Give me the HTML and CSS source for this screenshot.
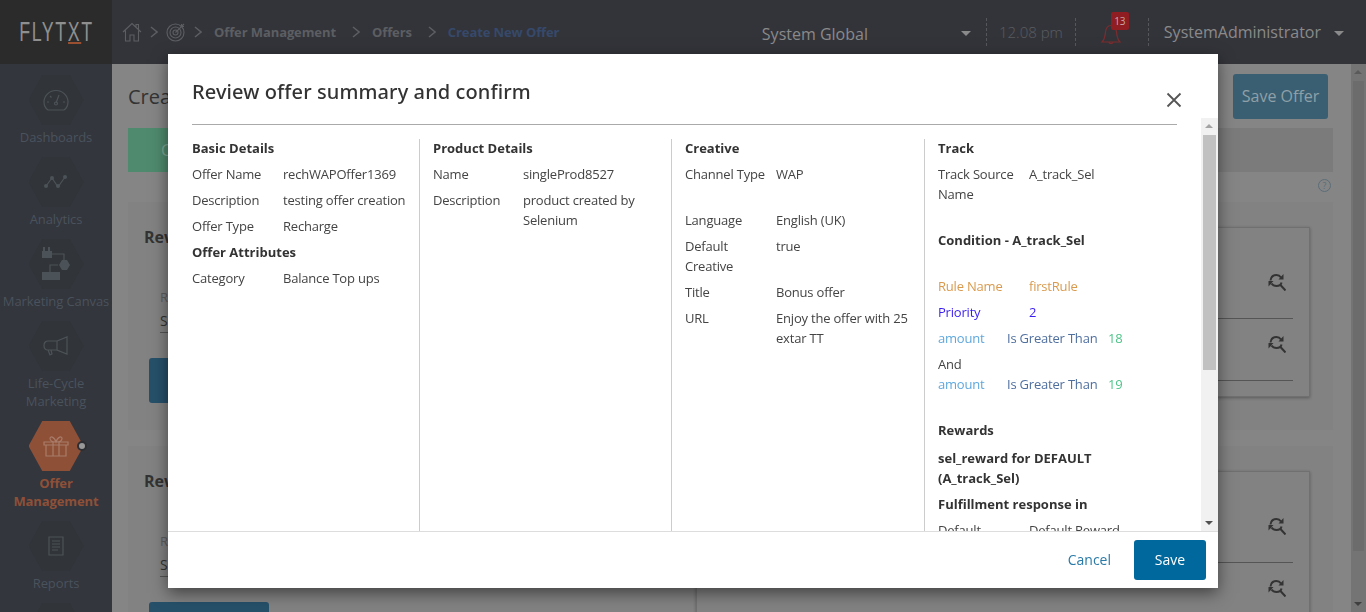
FILE: index.html
```html
<!DOCTYPE html>
<html lang="en">
<head>
    <meta charset="UTF-8">
    <title>Create New Offer</title>
    <link rel="stylesheet" href="styles.css">
</head>
<body>

    <header class="topbar">
        <div class="logo"><span class="logo-text">FLYT<span class="logo-x">X</span>T</span></div>
        <nav class="crumbs">
            <svg class="crumb-icon" viewBox="0 0 20 20"><path d="M1 10 10 1.500 19 10M3.500 8.500V19H8v-6h4v6h4.500V8.500M14 5V2.500h2.500V7.500"/></svg>
            <svg class="chev" viewBox="0 0 8 12"><path d="M1 1l6 5-6 5"/></svg>
            <svg class="crumb-icon" viewBox="0 0 20 20"><circle cx="9.500" cy="10.500" r="8.500"/><circle cx="9.500" cy="10.500" r="5.500"/><circle cx="9.500" cy="10.500" r="2.500"/><path d="M9.500 10.500 18 2M15.500 2v2.500H18"/></svg>
            <svg class="chev" viewBox="0 0 8 12"><path d="M1 1l6 5-6 5"/></svg>
            <span class="crumb crumb-first">Offer Management</span>
            <svg class="chev chev-wide" viewBox="0 0 8 12"><path d="M1 1l6 5-6 5"/></svg>
            <span class="crumb">Offers</span>
            <svg class="chev chev-wide" viewBox="0 0 8 12"><path d="M1 1l6 5-6 5"/></svg>
            <span class="crumb crumb-active">Create New Offer</span>
        </nav>
        <div class="top-right">
            <span class="region">System Global</span>
            <span class="caret caret-region"></span>
            <span class="clock">12.08 pm</span>
            <span class="bell">
                <svg viewBox="0 0 20 22"><path d="M1 20c3-3 3-6 3.500-10C5 6 7 3.500 10 3.500S15 6 15.500 10c.5 4 .5 7 3.500 10zM8 20c0 2 4 2 4 0"/></svg>
                <span class="badge">13</span>
            </span>
            <span class="user">SystemAdministrator</span>
            <span class="caret"></span>
        </div>
    </header>

    <div class="layout">
        <aside class="sidebar">
            <div class="nav-item">
                <div class="hex">
                    <svg viewBox="0 0 26 22"><path d="M5 21C2 19 1 15.500 1 13 1 6.500 6.500 1.500 13 1.500S25 6.500 25 13c0 2.500-1 6-4 8zM13 14l3-8M4 13h2M20 13h2M7 7l1.500 1.500"/><circle cx="13" cy="14.500" r="1.500"/></svg>
                </div>
                <div class="nav-label">Dashboards</div>
            </div>
            <div class="nav-item">
                <div class="hex">
                    <svg viewBox="0 0 26 16"><path d="M3 12 9 4l6 9 7-10"/><circle class="solid" cx="3" cy="12" r="2"/><circle class="solid" cx="9" cy="4" r="2"/><circle class="solid" cx="15" cy="12" r="2"/><circle class="solid" cx="22" cy="3" r="2"/></svg>
                </div>
                <div class="nav-label">Analytics</div>
            </div>
            <div class="nav-item">
                <div class="hex">
                    <svg class="canvas-icon" viewBox="0 0 30 36"><rect class="solid" x="1" y="5" width="10" height="7"/><rect class="solid" x="2" y="1" width="2" height="4"/><rect class="solid" x="7" y="1" width="2" height="4"/><path d="M11 8h12v6M17 19H9v8"/><polygon class="solid" points="18,19 21,14 26,14 29,19 26,24 21,24"/><rect class="solid" x="1" y="26" width="18" height="8"/></svg>
                </div>
                <div class="nav-label nav-label-wide">Marketing Canvas</div>
            </div>
            <div class="nav-item">
                <div class="hex">
                    <svg viewBox="0 0 26 20"><path d="M14 5 24 1v17L14 14zM14 5H5C2.500 5 1 7 1 9.500S2.500 14 5 14h9zM8 14l1 4-2 1-2-5"/></svg>
                </div>
                <div class="nav-label">Life-Cycle<br>Marketing</div>
            </div>
            <div class="nav-item nav-item-active">
                <div class="hex">
                    <svg viewBox="0 0 26 22"><path d="M1 7h24v3H1zM3 10h20v11H3zM10 7v14M16 7v14M13 7C10 7 7 6 7 3.500S11 1 13 7c2-6 6-6 6-3.500S16 7 13 7z"/></svg>
                    <span class="hex-dot"></span>
                </div>
                <div class="nav-label">Offer<br>Management</div>
            </div>
            <div class="nav-item">
                <div class="hex">
                    <svg class="report-icon" viewBox="0 0 16 20"><path d="M1 1h14v18H1zM4 5h8M4 8h8M4 11h8M4 14h6"/></svg>
                </div>
                <div class="nav-label">Reports</div>
            </div>
            <div class="nav-item">
                <div class="hex"></div>
            </div>
        </aside>

        <main class="page">
            <div class="page-head">
                <h1>Create New Offer</h1>
                <button class="save-offer">Save Offer</button>
            </div>
            <div class="steps"><div class="step-done">Create</div></div>
            <div class="help-row"><span class="help">?</span></div>

            <section class="review-card">
                <div class="review-left">
                    <h3>Reward</h3>
                    <div class="field-label">Reward</div>
                    <div class="field-value">Select</div>
                    <div class="blue-btn"></div>
                </div>
                <div class="review-right">
                    <div class="result-row">
                        <svg class="refresh" viewBox="0 0 18 18"><path d="M2.500 7.500C3 3.500 6 2 8.500 2c2 0 3.500 1 4.500 2.500M13.500 9.500c-.5 2.500-2.500 3.500-5 3.500-2 0-4-1-5-2.500M12 11.500l5.500 6"/><path class="solid" d="M10.500 6.500h5V1zM.5 8h5L.5 13.500z"/></svg>
                    </div>
                    <div class="result-row">
                        <svg class="refresh" viewBox="0 0 18 18"><path d="M2.500 7.500C3 3.500 6 2 8.500 2c2 0 3.500 1 4.500 2.500M13.500 9.500c-.5 2.500-2.500 3.500-5 3.500-2 0-4-1-5-2.500M12 11.500l5.500 6"/><path class="solid" d="M10.500 6.500h5V1zM.5 8h5L.5 13.500z"/></svg>
                    </div>
                </div>
            </section>

            <section class="review-card">
                <div class="review-left">
                    <h3>Reward</h3>
                    <div class="field-label">Reward</div>
                    <div class="field-value">Select</div>
                    <div class="blue-btn"></div>
                </div>
                <div class="review-right">
                    <div class="result-row">
                        <svg class="refresh" viewBox="0 0 18 18"><path d="M2.500 7.500C3 3.500 6 2 8.500 2c2 0 3.500 1 4.500 2.500M13.500 9.500c-.5 2.500-2.500 3.500-5 3.500-2 0-4-1-5-2.500M12 11.500l5.500 6"/><path class="solid" d="M10.500 6.500h5V1zM.5 8h5L.5 13.500z"/></svg>
                    </div>
                    <div class="result-row">
                        <svg class="refresh" viewBox="0 0 18 18"><path d="M2.500 7.500C3 3.500 6 2 8.500 2c2 0 3.500 1 4.500 2.500M13.500 9.500c-.5 2.500-2.500 3.500-5 3.500-2 0-4-1-5-2.500M12 11.500l5.500 6"/><path class="solid" d="M10.500 6.500h5V1zM.5 8h5L.5 13.500z"/></svg>
                    </div>
                    <div class="failure-label">Default Failure</div>
                    <div class="failure-text">Failure from Selenium from first rule</div>
                </div>
            </section>
        </main>

        <div class="page-scroll">
            <span class="arrow-up"></span>
            <span class="page-thumb"></span>
            <span class="arrow-down"></span>
        </div>
    </div>

    <div class="modal">
        <div class="modal-head">
            <h2>Review offer summary and confirm</h2>
            <svg class="close" viewBox="0 0 16 16"><path d="M1.500 1.500l13 13M14.500 1.500l-13 13"/></svg>
        </div>
        <div class="modal-body">
            <div class="modal-scroll">
                <hr class="head-line">
                <div class="summary">
                    <div class="col col-first">
                        <div class="heading">Basic Details</div>
                        <div class="row"><span class="key">Offer Name</span><span>rechWAPOffer1369</span></div>
                        <div class="row"><span class="key">Description</span><span>testing offer creation</span></div>
                        <div class="row"><span class="key">Offer Type</span><span>Recharge</span></div>
                        <div class="heading">Offer Attributes</div>
                        <div class="row"><span class="key">Category</span><span>Balance Top ups</span></div>
                    </div>
                    <div class="col">
                        <div class="heading">Product Details</div>
                        <div class="row row-90"><span class="key">Name</span><span>singleProd8527</span></div>
                        <div class="row row-90"><span class="key">Description</span><span>product created by Selenium</span></div>
                    </div>
                    <div class="col">
                        <div class="heading">Creative</div>
                        <div class="row row-spaced"><span class="key">Channel Type</span><span>WAP</span></div>
                        <div class="row"><span class="key">Language</span><span>English (UK)</span></div>
                        <div class="row"><span class="key">Default Creative</span><span>true</span></div>
                        <div class="row"><span class="key">Title</span><span>Bonus offer</span></div>
                        <div class="row"><span class="key">URL</span><span>Enjoy the offer with 25 extar TT</span></div>
                    </div>
                    <div class="col col-last">
                        <div class="heading">Track</div>
                        <div class="row row-spaced"><span class="key">Track Source Name</span><span>A_track_Sel</span></div>
                        <div class="heading heading-spaced">Condition - A_track_Sel</div>
                        <div class="row rule-name"><span class="key">Rule Name</span><span>firstRule</span></div>
                        <div class="row priority"><span class="key">Priority</span><span>2</span></div>
                        <div class="cond"><span class="cond-field">amount</span><span class="cond-op">Is Greater Than</span><span class="cond-val">18</span></div>
                        <div class="cond-and">And</div>
                        <div class="cond cond-spaced"><span class="cond-field">amount</span><span class="cond-op">Is Greater Than</span><span class="cond-val">19</span></div>
                        <div class="heading heading-tight">Rewards</div>
                        <div class="heading">sel_reward for DEFAULT (A_track_Sel)</div>
                        <div class="heading">Fulfillment response in</div>
                        <div class="row"><span class="key">Default</span><span>Default Reward</span></div>
                    </div>
                </div>
            </div>
            <div class="scrollbar">
                <span class="arrow-up"></span>
                <span class="thumb"></span>
                <span class="arrow-down"></span>
            </div>
        </div>
        <div class="modal-foot">
            <a class="cancel">Cancel</a>
            <button class="save">Save</button>
        </div>
    </div>

</body>
</html>
```

FILE: styles.css
```css
* {
    margin: 0;
    padding: 0;
    box-sizing: border-box;
}
html, body {
    height: 100%;
    overflow: hidden;
}
body {
    font-family: "Open Sans", "Noto Sans", sans-serif;
    font-size: 13px;
    color: #444;
    background: #858585;
}
svg {
    fill: none;
    stroke: currentColor;
    stroke-width: 1.2;
}
svg .solid {
    fill: currentColor;
    stroke: none;
}

/* top bar */
.topbar {
    display: flex;
    height: 64px;
    background: #33343a;
}
.logo {
    display: flex;
    align-items: center;
    justify-content: center;
    flex: none;
    width: 112px;
    height: 64px;
    background: #2b2b2b;
    color: #8f8f8f;
    font-family: "Liberation Sans", sans-serif;
    font-size: 27px;
    white-space: nowrap;
}
.logo-text {
    display: inline-block;
    transform: scaleX(.66);
    letter-spacing: 2.4px;
}
.logo-x {
    display: inline-block;
    line-height: 20px;
    border-bottom: 2px solid #9a4f30;
}
.crumbs {
    display: flex;
    align-items: center;
    padding-left: 10px;
    color: #5c5e62;
}
.crumb-icon {
    width: 20px;
    height: 20px;
    stroke-width: 1.1;
}
.chev {
    width: 8px;
    height: 12px;
    margin: 0 8px;
    stroke-width: 1.5;
}
.chev-wide {
    margin: 0 12px 0 16px;
}
.crumb {
    font-weight: 700;
    letter-spacing: -.1px;
    white-space: nowrap;
}
.crumb-first {
    margin-left: 4px;
}
.crumb-active {
    color: #36496b;
}
.top-right {
    display: flex;
    align-items: center;
    margin-left: auto;
    padding-right: 22px;
    color: #8a8a8a;
    font-size: 16px;
}
.region {
    margin: 4px 93px 0 0;
}
.caret {
    width: 0;
    height: 0;
    border-left: 5px solid transparent;
    border-right: 5px solid transparent;
    border-top: 5px solid #8a8a8a;
    margin-top: 3px;
}
.caret-region {
    margin-right: 15px;
}
.clock {
    padding: 0 12px;
    border-left: 1px dashed #55575c;
    border-right: 1px dashed #55575c;
    color: #5a5c60;
    font-size: 15px;
    font-weight: 300;
    line-height: 28px;
}
.bell {
    position: relative;
    display: flex;
    width: 73px;
    height: 28px;
    padding: 4px 0 0 25px;
    border-right: 1px dashed #55575c;
    color: #7d2c2e;
}
.bell svg {
    width: 20px;
    height: 22px;
    stroke-width: 1.2;
}
.badge {
    position: absolute;
    top: -6px;
    left: 35px;
    width: 18px;
    height: 18px;
    border-radius: 2px;
    background: #8f1d21;
    color: #c9a6a7;
    font-size: 10px;
    line-height: 18px;
    text-align: center;
}
.user {
    margin: 0 13px 0 15px;
}

/* sidebar and page behind the dialog */
.layout {
    display: flex;
    height: 548px;
}
.sidebar {
    flex: none;
    width: 112px;
    padding-top: 11px;
    background: #33363c;
    overflow: hidden;
}
.nav-item {
    margin-bottom: 11px;
    text-align: center;
    color: #4a525c;
}
.hex {
    position: relative;
    display: flex;
    align-items: center;
    justify-content: center;
    width: 55px;
    height: 50px;
    margin: 0 auto 3px;
    color: #4c5358;
}
.hex::before {
    content: "";
    position: absolute;
    inset: 0;
    background: #313439;
    clip-path: polygon(25% 0, 75% 0, 100% 50%, 75% 100%, 25% 100%, 0 50%);
}
.hex svg {
    position: relative;
    width: 26px;
    height: 22px;
}
.hex .canvas-icon {
    width: 30px;
    height: 36px;
}
.hex .report-icon {
    width: 16px;
    height: 20px;
}
.nav-label {
    letter-spacing: -.1px;
    line-height: 18px;
}
.nav-label-wide {
    white-space: nowrap;
}
.nav-item-active {
    color: #8f5038;
    font-weight: 700;
}
.nav-item-active .hex {
    color: #a87c68;
}
.nav-item-active .hex::before {
    background: #8f5038;
}
.hex-dot {
    position: absolute;
    top: 20px;
    right: -3px;
    width: 10px;
    height: 10px;
    border: 2px solid #2d2e33;
    border-radius: 50%;
    background: #999;
}
.page {
    flex: 1;
    min-width: 0;
    padding: 10px 18px 0 16px;
    overflow: hidden;
}
.page-head {
    display: flex;
    align-items: center;
    justify-content: space-between;
    height: 45px;
    padding-right: 5px;
}
.page-head h1 {
    font-size: 20px;
    font-weight: 400;
    color: #333;
}
.save-offer {
    width: 95px;
    height: 45px;
    padding-bottom: 2px;
    border: none;
    border-radius: 3px;
    background: #3a5f72;
    color: #8fa0a8;
    font: inherit;
    font-size: 16px;
}
.steps {
    height: 44px;
    margin-top: 9px;
    background: #7b7b7b;
}
.step-done {
    width: 200px;
    height: 44px;
    padding-left: 33px;
    background: #4f8a6e;
    color: #7fa893;
    font-size: 16px;
    line-height: 44px;
}
.help-row {
    display: flex;
    justify-content: flex-end;
    height: 30px;
    padding: 7px 2px 0 0;
}
.help {
    width: 13px;
    height: 13px;
    border: 1px solid #5b6d78;
    border-radius: 50%;
    color: #5b6d78;
    font-size: 9px;
    line-height: 11px;
    text-align: center;
}
.review-card {
    display: flex;
    justify-content: space-between;
    height: 228px;
    margin-bottom: 16px;
    padding: 25px 23px 0 16px;
    background: #828282;
}
.review-left h3 {
    font-size: 16px;
    line-height: 20px;
    color: #333;
}
.field-label {
    margin: 41px 0 0 16px;
    color: #5e5e5e;
}
.field-value {
    width: 200px;
    margin-left: 16px;
    padding: 5px 0 2px;
    border-bottom: 1px solid #555;
    color: #333;
    font-size: 14px;
}
.blue-btn {
    width: 120px;
    height: 45px;
    margin: 25px 0 0 5px;
    border-radius: 3px;
    background: #26506a;
}
.review-right {
    width: 614px;
    height: 170px;
    padding: 0 16px;
    background: #828282;
    border: 1px solid #707070;
    box-shadow: 0 1px 3px rgba(0, 0, 0, .3);
}
.result-row {
    display: flex;
    justify-content: flex-end;
    align-items: center;
    height: 62px;
    padding: 0 7px 12px 0;
    border-bottom: 1px solid #555;
    color: #333;
}
.result-row:first-child {
    height: 91px;
    padding-top: 29px;
}
.refresh {
    width: 18px;
    height: 18px;
    stroke-width: 2;
}
.failure-label {
    margin-top: 3px;
    color: #4d4d4d;
    line-height: 16px;
}
.failure-text {
    color: #2e4a5c;
    font-size: 16px;
    line-height: 22px;
    white-space: nowrap;
}
.page-scroll {
    position: relative;
    flex: none;
    width: 15px;
    background: #747474;
}
.page-thumb {
    position: absolute;
    top: 17px;
    left: 2px;
    width: 11px;
    height: 470px;
    background: #6c6c6c;
}
.page-scroll .arrow-up {
    top: 6px;
    left: 3px;
    border-bottom-color: #5a5a5a;
}
.page-scroll .arrow-down {
    bottom: 6px;
    left: 3px;
    border-top-color: #3f3f3f;
}

/* dialog */
.modal {
    position: fixed;
    top: 54px;
    left: 168px;
    display: flex;
    flex-direction: column;
    width: 1050px;
    height: 534px;
    background: #fff;
    box-shadow: 0 5px 15px rgba(0, 0, 0, .5);
}
.modal-head {
    position: relative;
    flex: none;
    height: 64px;
    padding: 25px 0 0 24px;
}
.modal-head h2 {
    font-family: "Noto Sans", sans-serif;
    font-size: 20px;
    font-weight: 500;
    line-height: 26px;
    letter-spacing: .1px;
    color: #333;
}
.close {
    position: absolute;
    top: 38px;
    right: 36px;
    width: 16px;
    height: 16px;
    color: #555;
    stroke-width: 1.8;
}
.modal-body {
    position: relative;
    display: flex;
    flex: none;
    height: 413px;
    overflow: hidden;
}
.modal-scroll {
    flex: 1;
    min-width: 0;
    overflow: hidden;
}
.head-line {
    height: 1px;
    margin: 6px 24px 14px 24px;
    border: none;
    background: #aaa;
}
.summary {
    display: grid;
    grid-template-columns: 252px 252px 253px 1fr;
    height: 392px;
}
.col {
    padding-left: 13px;
    padding-right: 10px;
    border-right: 1px solid #ccc;
}
.col > :first-child {
    margin-top: -1px;
}
.col-first {
    padding-left: 24px;
}
.col-last {
    padding-right: 60px;
    border-right: none;
}
.heading {
    margin-bottom: 6px;
    color: #333;
    font-weight: 700;
    line-height: 20px;
}
.heading-spaced {
    margin-bottom: 26px;
}
.heading-tight {
    margin-bottom: 8px;
}
.row {
    display: flex;
    margin-bottom: 6px;
    letter-spacing: -.2px;
    line-height: 20px;
}
.row .key {
    flex: none;
    width: 91px;
    padding-right: 8px;
}
.row-90 .key {
    width: 90px;
}
.row-spaced {
    margin-bottom: 26px;
}
.rule-name {
    color: #d99a4e;
}
.priority {
    color: #3a1ff0;
}
.cond {
    display: flex;
    margin-bottom: 6px;
    letter-spacing: -.2px;
    line-height: 20px;
}
.cond-spaced {
    margin-bottom: 26px;
}
.cond-field {
    width: 69px;
    color: #5fa8dd;
}
.cond-op {
    width: 101px;
    color: #4f6f9f;
}
.cond-val {
    color: #4fc58a;
}
.cond-and {
    letter-spacing: -.2px;
    line-height: 20px;
}
.scrollbar {
    position: relative;
    flex: none;
    width: 17px;
    background: #f1f1f1;
}
.thumb {
    position: absolute;
    top: 17px;
    left: 2px;
    width: 13px;
    height: 235px;
    background: #c1c1c1;
}
.arrow-up, .arrow-down {
    position: absolute;
    width: 0;
    height: 0;
    border-left: 4px solid transparent;
    border-right: 4px solid transparent;
}
.arrow-up {
    top: 6px;
    left: 4px;
    border-bottom: 4px solid #a3a3a3;
}
.arrow-down {
    bottom: 6px;
    left: 4px;
    border-top: 4px solid #505050;
}
.modal-foot {
    display: flex;
    flex: 1;
    align-items: center;
    justify-content: flex-end;
    gap: 23px;
    padding-right: 12px;
    border-top: 1px solid #ddd;
}
.cancel {
    padding-bottom: 2px;
    color: #2a7aa8;
    font-size: 14px;
}
.save {
    width: 72px;
    height: 40px;
    padding-bottom: 2px;
    border: none;
    border-radius: 3px;
    background: #00689d;
    color: #fff;
    font: inherit;
    font-size: 14px;
}
```
